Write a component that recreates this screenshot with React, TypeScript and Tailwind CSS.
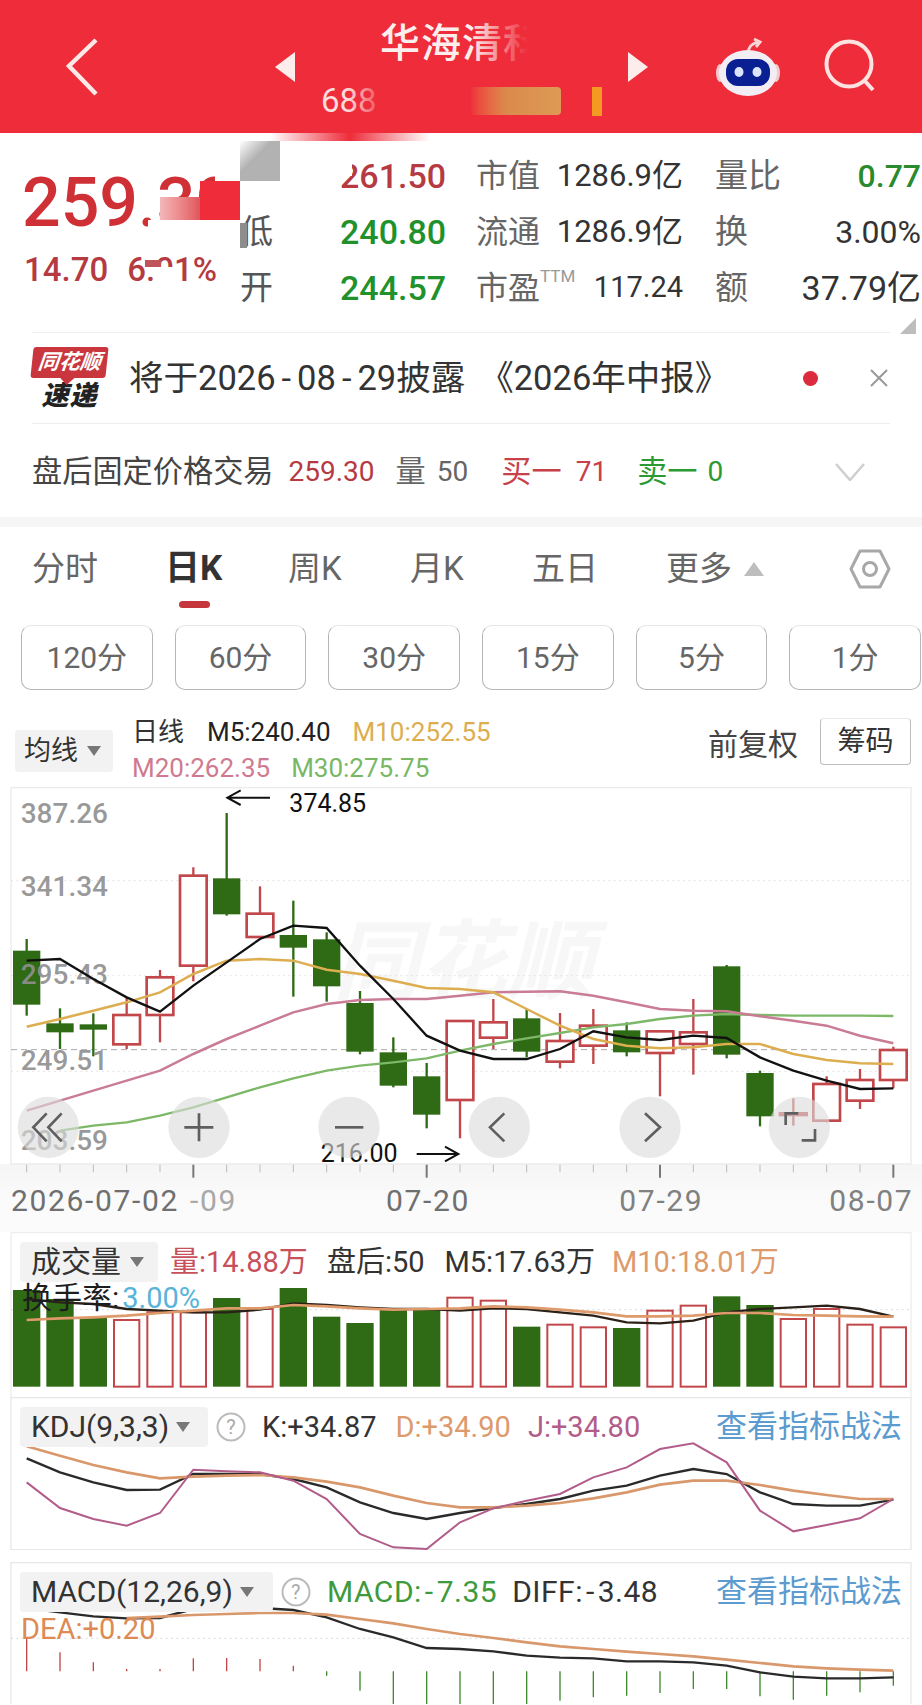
import React from "react";

const cx = (i: number) => 80 + 100 * i;
const pts = (a: number[], start = 0) => a.map((y, i) => `${cx(i + start)},${y}`).join(" ");

const GREEN = "#2F6A14";
const RED = "#C2474A";

// wick top, wick bottom, body top, body bottom, red
const candles: [number, number, number, number, boolean][] = [
  [480, 710, 515, 677, false],
  [688, 810, 733, 760, false],
  [703, 832, 736, 752, false],
  [655, 810, 708, 796, true],
  [573, 790, 595, 708, true],
  [265, 607, 290, 560, true],
  [102, 410, 298, 406, false],
  [322, 475, 404, 474, true],
  [365, 653, 468, 506, false],
  [460, 668, 481, 622, false],
  [636, 826, 672, 818, false],
  [775, 925, 820, 920, false],
  [852, 1048, 892, 1007, false],
  [726, 1078, 726, 963, true],
  [660, 810, 730, 776, true],
  [690, 835, 718, 818, false],
  [702, 868, 786, 848, true],
  [690, 855, 740, 800, true],
  [730, 832, 754, 820, false],
  [757, 952, 757, 822, true],
  [660, 887, 760, 795, true],
  [558, 838, 562, 827, false],
  [875, 1042, 882, 1012, false],
  [958, 1040, 1003, 1008, true],
  [892, 1030, 915, 1025, true],
  [870, 990, 903, 965, true],
  [803, 928, 813, 903, true],
];

const m5 = [545, 540, 600, 655, 698, 620, 550, 480, 440, 447, 560, 660, 770, 815, 840, 840, 810, 757, 775, 783, 770, 777, 835, 875, 905, 930, 928];
const m10 = [743, 720, 695, 670, 640, 585, 545, 540, 545, 572, 585, 605, 627, 630, 640, 690, 740, 780, 800, 808, 805, 795, 795, 825, 843, 853, 855];
const m20 = [995, 965, 935, 905, 875, 825, 780, 740, 700, 675, 663, 660, 660, 650, 640, 638, 637, 650, 670, 690, 695, 697, 712, 725, 740, 770, 793];
const m30 = [1055, 1040, 1030, 1010, 985, 955, 925, 898, 875, 860, 850, 838, 815, 795, 778, 762, 745, 735, 720, 710, 705, 708, 710, 710, 710, 711];

const volTops: [number, boolean][] = [
  [213, false], [240, false], [295, false], [303, true], [280, true], [280, true], [237, false], [270, true], [207, false],
  [293, false], [312, false], [270, false], [270, false], [236, true], [245, true], [323, false], [317, true], [325, true],
  [327, false], [275, true], [260, true], [232, false], [258, false], [300, true], [270, true], [317, true], [325, true],
];
const volBlack = [240, 250, 255, 270, 275, 280, 280, 272, 253, 258, 265, 270, 270, 275, 268, 270, 280, 290, 310, 313, 305, 280, 270, 265, 260, 270, 293];
const volOrange = [303, 298, 295, 290, 282, 275, 268, 268, 258, 262, 268, 272, 270, 268, 262, 265, 272, 280, 292, 292, 290, 282, 282, 288, 290, 292, 293];

const kdjJ = [130, 207, 240, 260, 222, 92, 97, 100, 125, 180, 285, 325, 330, 250, 208, 185, 165, 115, 85, 30, 13, 70, 215, 277, 258, 238, 180];
const kdjK = [58, 100, 130, 153, 152, 105, 105, 105, 120, 145, 190, 222, 240, 222, 207, 195, 180, 155, 140, 110, 90, 105, 160, 195, 200, 200, 182];
const kdjD = [22, 50, 78, 100, 118, 113, 110, 108, 115, 128, 145, 170, 192, 205, 205, 200, 192, 178, 160, 137, 125, 125, 138, 155, 168, 180, 180];

const macdBars = [598, 640, 670, 690, 690, 658, 657, 660, 680, 710, 755, 800, 800, 800, 800, 800, 785, 775, 770, 762, 750, 750, 772, 782, 770, 760, 740];
const diff = [508, 520, 532, 538, 537, 510, 507, 507, 513, 535, 570, 595, 627, 630, 637, 650, 656, 658, 667, 667, 670, 680, 700, 713, 718, 718, 715];
const dea = [537, 533, 528, 525, 522, 522, 527, 540, 553, 570, 585, 597, 610, 622, 630, 638, 645, 652, 662, 672, 682, 688, 692, 695];

function Caret() {
  return (
    <svg width="16" height="12" viewBox="0 0 16 12">
      <polygon points="1,1 15,1 8,11" fill="#777" />
    </svg>
  );
}

function Help() {
  return (
    <svg width="30" height="30" viewBox="0 0 30 30">
      <circle cx="15" cy="15" r="13.5" fill="#fff" stroke="#bbb" strokeWidth="2" />
      <text x="15" y="22" textAnchor="middle" fontSize="20" fill="#aaa">?</text>
    </svg>
  );
}

function Dash({ w = "mx-[3px]" }: { w?: string }) {
  return <span className={w}>-</span>;
}

function RoundBtn({ x, children }: { x: number; children: React.ReactNode }) {
  return (
    <g>
      <circle cx={x} cy={1045} r={92} fill="#dcdcdc" fillOpacity={0.62} />
      <g fill="none" stroke="#5f5f5f" strokeWidth={8}>{children}</g>
    </g>
  );
}

function MainChart() {
  return (
    <svg viewBox="0 24 2766 1335" className="block h-[445px] w-[922px]">
      <defs>
        <linearGradient id="axisBg" x1="0" y1="0" x2="0" y2="1">
          <stop offset="0" stopColor="#f5f5f5" />
          <stop offset="0.5" stopColor="#fafafa" />
          <stop offset="1" stopColor="#fcfcfc" />
        </linearGradient>
      </defs>
      <rect x="0" y="1155" width="2766" height="204" fill="url(#axisBg)" />
      <rect x="33" y="26" width="2700" height="1129" fill="#fff" stroke="#ebebeb" strokeWidth="4" />
      <text x="1000" y="640" fontSize="260" fontWeight="700" fontStyle="italic" fill="#f7f7f7">同花顺</text>
      {[305, 590, 877].map((y) => (
        <line key={y} x1="33" x2="2733" y1={y} y2={y} stroke="#e4e4e4" strokeWidth="3" strokeDasharray="6 10" />
      ))}
      <line x1="33" x2="2733" y1="812" y2="812" stroke="#aaa" strokeWidth="3" strokeDasharray="18 12" />
      {candles.map(([wt, wb, bt, bb, red], i) => (
        <g key={i}>
          <line x1={cx(i)} x2={cx(i)} y1={wt} y2={wb} stroke={red ? RED : GREEN} strokeWidth="7" />
          {red ? (
            <rect x={cx(i) - 40} y={bt} width="80" height={bb - bt} fill={i === 23 ? "none" : "#fff"} stroke={RED} strokeWidth="8" />
          ) : (
            <rect x={cx(i) - 41} y={bt} width="82" height={bb - bt} fill={GREEN} />
          )}
        </g>
      ))}
      <g fill="#8f8f8f" fontSize="84" fontWeight="500" fillOpacity="0.92">
        <text x="62" y="132">387.26</text>
        <text x="62" y="351">341.34</text>
        <text x="62" y="614">295.43</text>
        <text x="62" y="874">249.51</text>
        <text x="62" y="1114">203.59</text>
      </g>
      <polyline points={pts(m30, 1)} fill="none" stroke="#7DB868" strokeWidth="7" />
      <polyline points={pts(m20)} fill="none" stroke="#C97C93" strokeWidth="7.5" />
      <polyline points={pts(m10)} fill="none" stroke="#DDAE50" strokeWidth="7.5" />
      <polyline points={pts(m5)} fill="none" stroke="#111" strokeWidth="7" />
      <g stroke="#111" strokeWidth="6" fill="none">
        <path d="M810 56H685M722 34L682 56L722 78" />
        <path d="M1250 1125H1372M1335 1103L1375 1125L1335 1147" />
      </g>
      <text x="868" y="100" fontSize="75" fill="#111">374.85</text>
      <text x="962" y="1148" fontSize="75" fill="#111">216.00</text>
      <RoundBtn x={145}><path d="M140 1003L100 1045L140 1087M185 1003L145 1045L185 1087" /></RoundBtn>
      <RoundBtn x={597}><path d="M597 1003V1087M553 1045H640" /></RoundBtn>
      <RoundBtn x={1047}><path d="M1005 1045H1090" /></RoundBtn>
      <RoundBtn x={1498}><path d="M1513 1003L1470 1045L1513 1087" /></RoundBtn>
      <RoundBtn x={1950}><path d="M1935 1003L1980 1045L1935 1087" /></RoundBtn>
      <RoundBtn x={2398}><path d="M2357 1038V1003H2395M2445 1050V1084H2405" /></RoundBtn>
      {candles.map((_, i) => {
        const big = [5, 12, 19, 26].includes(i);
        return <line key={i} x1={cx(i)} x2={cx(i)} y1="1157" y2={big ? 1196 : 1180} stroke={big ? "#777" : "#bbb"} strokeWidth={big ? 6 : 3} />;
      })}
      <g fontSize="90" fill="#6f6f6f" letterSpacing="5">
        <text x="33" y="1296">2026-07-02</text>
        <text x="570" y="1296" fill="#a8a8a8">-09</text>
        <text x="1158" y="1296">07-20</text>
        <text x="1858" y="1296" fill="#808080">07-29</text>
        <text x="2488" y="1296" fill="#808080">08-07</text>
      </g>
    </svg>
  );
}

function VolumeChart() {
  return (
    <svg viewBox="0 39 2766 495" className="absolute inset-0 h-[165px] w-[922px]">
      <rect x="33" y="41" width="2700" height="600" fill="#fff" stroke="#ededed" strokeWidth="4" />
      <line x1="33" x2="2733" y1="272" y2="272" stroke="#ddd" strokeWidth="3" strokeDasharray="6 10" />
      {volTops.map(([t, red], i) =>
        red ? (
          <rect key={i} x={cx(i) - 38} y={t} width="76" height={503 - t} fill="#fff" stroke={RED} strokeWidth="6" />
        ) : (
          <rect key={i} x={cx(i) - 41} y={t} width="82" height={503 - t} fill={GREEN} />
        )
      )}
      <polyline points={pts(volBlack)} fill="none" stroke="#2b2118" strokeWidth="7" />
      <polyline points={pts(volOrange)} fill="none" stroke="#DE9A6B" strokeWidth="8" />
    </svg>
  );
}

function KdjChart() {
  return (
    <svg viewBox="0 -126 2766 459" className="absolute inset-0 h-[153px] w-[922px]">
      <rect x="33" y="-124" width="2700" height="456" fill="#fff" stroke="#e8e8e8" strokeWidth="4" />
      <polyline points={pts(kdjK)} fill="none" stroke="#2a2a2a" strokeWidth="7" />
      <polyline points={pts(kdjD)} fill="none" stroke="#D9986C" strokeWidth="8" />
      <polyline points={pts(kdjJ)} fill="none" stroke="#B25C8A" strokeWidth="6" />
    </svg>
  );
}

function MacdChart() {
  return (
    <svg viewBox="0 369 2766 426" className="absolute inset-0 h-[142px] w-[922px]">
      <rect x="33" y="371" width="2700" height="600" fill="#fff" stroke="#e8e8e8" strokeWidth="4" />
      <line x1="33" x2="2733" y1="598" y2="598" stroke="#ddd" strokeWidth="3" strokeDasharray="6 10" />
      {macdBars.map((y, i) => (
        <line key={i} x1={cx(i)} x2={cx(i)} y1="697" y2={y} stroke={i < 9 ? "#C2474A" : "#3E8A2C"} strokeWidth="4" />
      ))}
      <polyline points={pts(diff)} fill="none" stroke="#2a2a2a" strokeWidth="7" />
      <polyline points={pts(dea, 3)} fill="none" stroke="#D9986C" strokeWidth="8" />
    </svg>
  );
}

function StatRow({
  a, v, vc, b, bv, bvc = "text-[31px]", c, cv, cvc = "text-[32px] text-[#333]",
}: {
  a: string; v: string; vc: string; b: React.ReactNode; bv: string; bvc?: string; c: string; cv: string; cvc?: string;
}) {
  return (
    <div className="flex h-[56px] items-center">
      <div className="w-[100px] text-[33px] text-[#555]">{a}</div>
      <div className={`w-[105px] text-right text-[34px] font-medium ${vc}`}>{v}</div>
      <div className="ml-[31px] w-[80px] whitespace-nowrap text-[32px] text-[#666]">{b}</div>
      <div className={`w-[127px] whitespace-nowrap text-right text-[#333] ${bvc}`}>{bv}</div>
      <div className="ml-[32px] flex flex-1 items-center justify-between">
        <span className="text-[33px] text-[#666]">{c}</span>
        <span className={cvc}>{cv}</span>
      </div>
    </div>
  );
}

export default function App() {
  return (
    <div className="relative h-[1705px] w-[922px] overflow-hidden bg-white font-['Roboto','Noto_Sans_CJK_SC',sans-serif]">
      {/* header */}
      <header className="relative flex h-[133px] items-center bg-[#EE2C3A]">
        <svg width="40" height="62" viewBox="0 0 40 62" className="ml-[62px]">
          <polyline points="34,4 7,30 34,58" fill="none" stroke="#fde8e8" strokeWidth="4.5" />
        </svg>
        <svg width="22" height="32" viewBox="0 0 22 32" className="ml-[172px]">
          <polygon points="21,1 21,31 1,16" fill="#fdecec" />
        </svg>
        <div className="relative ml-[25px] flex h-[133px] w-[306px] flex-col">
          <div className="mt-[20px] w-[320px] pl-[59px] text-[40px] font-medium leading-[48px] tracking-[1px] text-[#fdeeee]">华海清科</div>
          <div className="absolute left-[150px] top-[18px] h-[56px] w-[95px] bg-gradient-to-r from-transparent to-[#EE2C3A] to-[60%]" />
          <div className="mt-[18px] flex items-center">
            <span className="text-[33px] leading-[30px] text-[#fbdcdc]">688</span>
            <div className="-ml-[30px] h-[30px] w-[40px] bg-gradient-to-r from-transparent to-[#EE2C3A]" />
          </div>
        </div>
        <svg width="22" height="32" viewBox="0 0 22 32">
          <polygon points="1,1 1,31 21,16" fill="#fdecec" />
        </svg>
        <svg width="68" height="62" viewBox="0 0 68 62" className="ml-[65px]">
          <path d="M34 18C34 12 36 8 44 6M40 3l6 3l-4 5" fill="none" stroke="#fbd5d5" strokeWidth="3" />
          <ellipse cx="6" cy="37" rx="4" ry="9" fill="#f2c9cf" />
          <ellipse cx="62" cy="37" rx="4" ry="9" fill="#f2c9cf" />
          <ellipse cx="34" cy="37" rx="29" ry="23" fill="#f3eef3" />
          <rect x="12" y="23" width="44" height="27" rx="12" fill="#0A1F91" />
          <ellipse cx="25" cy="36" rx="4.5" ry="5" fill="#dbe4fb" />
          <ellipse cx="43" cy="36" rx="4.5" ry="5" fill="#dbe4fb" />
        </svg>
        <svg width="56" height="58" viewBox="0 0 56 58" className="ml-[41px]">
          <circle cx="26" cy="26" r="22.5" fill="none" stroke="#fde2e2" strokeWidth="4" />
          <line x1="41" y1="42" x2="50" y2="52" stroke="#fde2e2" strokeWidth="4" />
        </svg>
        {/* redacted patch on the code line */}
        <div className="absolute left-[440px] top-[87px] h-[28px] w-[121px] rounded-r-sm bg-gradient-to-r from-[#EE2C3A] from-[25%] via-[#DB8A4C] via-[55%] to-[#DE9B55]" />
        <div className="absolute left-[592px] top-[87px] h-[29px] w-[10px] bg-[#F49A22]" />
      </header>

      {/* quote */}
      <section className="relative flex h-[199px]">
        <div className="w-[240px] pl-[22px] pt-[36px]">
          <div className="whitespace-nowrap text-[68px] font-medium leading-[68px] text-[#CF3036]">259.30</div>
          <div className="mt-[18px] flex items-center gap-[19px] whitespace-nowrap pl-[2px] text-[33px] font-medium leading-[30px] text-[#B53A42]">
            <span>14.70</span>
            <span>6.01%</span>
          </div>
        </div>
        <div className="flex-1 pr-[1px] pt-[15px]">
          <StatRow a="" v="261.50" vc="text-[#B53A42]" b="市值" bv="1286.9亿" c="量比" cv="0.77" cvc="text-[32px] font-medium text-[#2A8A2E]" />
          <StatRow a="低" v="240.80" vc="text-[#21912B]" b="流通" bv="1286.9亿" c="换" cv="3.00%" />
          <StatRow
            a="开"
            v="244.57"
            vc="text-[#21912B]"
            b={<>市盈<span className="align-top text-[17px] text-[#999]">TTM</span></>}
            bv="117.24"
            bvc="text-[29px]"
            c="额"
            cv="37.79亿"
            cvc="text-[34px] text-[#333]"
          />
        </div>
        {/* redaction blocks laid over the quote */}
        <div className="absolute left-[270px] top-0 h-[8px] w-[160px] bg-gradient-to-r from-transparent via-[#EE2C3A] to-transparent" />
        <div className="absolute left-[240px] top-[8px] h-[40px] w-[40px] bg-gradient-to-br from-white to-[#b2b2b2] to-[40%]" />
        <div className="absolute left-[200px] top-[48px] h-[39px] w-[40px] bg-[#EE2C3A]" />
        <div className="absolute left-[160px] top-[64px] h-[23px] w-[40px] bg-gradient-to-r from-[#f2b8bb] to-[#E0555C]" />
        <div className="absolute left-[148px] top-[87px] h-[34px] w-[92px] bg-white" />
        <div className="absolute left-[215px] top-[30px] h-[18px] w-[25px] bg-white" />
        <div className="absolute left-[340px] top-[25px] h-[18px] w-[12px] bg-white" />
        <div className="absolute left-[240px] top-[90px] h-[25px] w-[7px] bg-[#8d8d8d]" />
        <div className="absolute left-[145px] top-[127px] h-[7px] w-[16px] bg-[#C0525A]" />
        <div className="absolute left-[154px] top-[134px] h-[22px] w-[19px] bg-white" />
        <svg width="16" height="16" viewBox="0 0 16 16" className="absolute left-[900px] top-[185px]">
          <polygon points="16,0 16,16 0,16" fill="#bdbdbd" />
        </svg>
      </section>

      {/* notice */}
      <div className="mx-[32px] flex h-[92px] items-center border-y border-[#eeeeee]">
        <div className="flex h-[63px] w-[75px] flex-col items-center">
          <div className="relative flex h-[31px] w-[75px] -skew-x-6 items-center justify-center rounded-[3px] bg-[#C9363E] text-[21px] font-bold italic leading-none text-white">
            同花顺
            <div className="absolute -bottom-[5px] left-[32px] size-[10px] rotate-45 bg-[#C9363E]" />
          </div>
          <div className="mt-[5px] text-[27px] font-black italic leading-[27px] tracking-[1px] text-[#222]">速递</div>
        </div>
        <div className="ml-[22px] whitespace-nowrap pt-[1px] text-[34.5px] leading-none text-[#333]">
          将于2026<Dash w="mx-[6px]" />08<Dash w="mx-[6px]" />29披露<span className="ml-[14px]">《</span>2026年中报》
        </div>
        <div className="ml-auto mr-[52px] size-[15px] rounded-full bg-[#DB2B3C]" />
        <svg width="18" height="18" viewBox="0 0 18 18" className="mr-[2px]">
          <path d="M1 1L17 17M17 1L1 17" stroke="#999" strokeWidth="2" />
        </svg>
      </div>

      {/* after hours */}
      <div className="flex h-[93px] items-center whitespace-nowrap pl-[32px] pr-[57px] pt-[2px] text-[30.2px]">
        <span className="text-[#444]">盘后固定价格交易</span>
        <span className="ml-[15px] text-[28px] text-[#B53A42]">259.30</span>
        <span className="ml-[21px] text-[#666]">量</span>
        <span className="ml-[11px] text-[28px] text-[#666]">50</span>
        <span className="ml-[33px] text-[#C8404A]">买一</span>
        <span className="ml-[14px] text-[28px] text-[#C8404A]">71</span>
        <span className="ml-[30px] text-[#2C9A34]">卖一</span>
        <span className="ml-[10px] text-[28px] text-[#2C9A34]">0</span>
        <svg width="30" height="18" viewBox="0 0 30 18" className="ml-auto">
          <polyline points="1,1 15,17 29,1" fill="none" stroke="#cfcfcf" strokeWidth="2.5" />
        </svg>
      </div>
      <div className="h-[10px] bg-[#f6f6f6]" />

      {/* tabs */}
      <div className="flex h-[98px] items-start whitespace-nowrap pl-[32px] text-[33px] text-[#666]">
        <div className="flex h-[84px] w-[133px] items-center">分时</div>
        <div className="relative flex h-[84px] w-[123px] items-center text-[35px] font-bold text-[#333]">
          日K
          <div className="absolute left-[14px] top-[74px] h-[7px] w-[31px] rounded-full bg-[#C6373D]" />
        </div>
        <div className="flex h-[84px] w-[122px] items-center">周K</div>
        <div className="flex h-[84px] w-[122px] items-center">月K</div>
        <div className="flex h-[84px] w-[134px] items-center">五日</div>
        <div className="flex h-[84px] items-center">
          更多
          <svg width="20" height="14" viewBox="0 0 20 14" className="ml-[12px]">
            <polygon points="10,0 20,14 0,14" fill="#bdbdbd" />
          </svg>
        </div>
        <svg width="42" height="40" viewBox="0 0 42 40" className="ml-[85px] mt-[22px]">
          <polygon points="11,2 31,2 40,20 31,38 11,38 2,20" fill="none" stroke="#a8a8a8" strokeWidth="3" strokeLinejoin="round" />
          <circle cx="21" cy="20" r="6.5" fill="none" stroke="#a8a8a8" strokeWidth="3" />
        </svg>
      </div>

      {/* periods */}
      <div className="grid h-[65px] grid-cols-6 gap-[22px] pl-[21px] pr-[1px]">
        {["120分", "60分", "30分", "15分", "5分", "1分"].map((t) => (
          <div key={t} className="flex items-center justify-center rounded-[10px] border border-[#b5b5b5] border-t-[#e6e6e6] text-[30px] text-[#666]">{t}</div>
        ))}
      </div>

      {/* legend */}
      <div className="flex h-[97px] items-start whitespace-nowrap pl-[15px] pr-[11px] text-[26px]">
        <div className="mt-[40px] flex h-[42px] w-[98px] items-center gap-[8px] rounded-[4px] bg-[#f2f2f2] pl-[9px] text-[27px] text-[#333]">
          均线 <Caret />
        </div>
        <div className="ml-[19px] mt-[24px] leading-[36px]">
          <div className="flex">
            <span className="text-[#333]">日线</span>
            <span className="ml-[23px] text-[#222]">M5:240.40</span>
            <span className="ml-[22px] text-[#DDAE50]">M10:252.55</span>
          </div>
          <div className="flex">
            <span className="text-[#D07A90]">M20:262.35</span>
            <span className="ml-[21px] text-[#78B865]">M30:275.75</span>
          </div>
        </div>
        <div className="ml-auto mt-[28px] flex items-start">
          <span className="mt-[8px] text-[30px] leading-[38px] text-[#444]">前复权</span>
          <div className="ml-[22px] flex h-[47px] w-[91px] items-center justify-center rounded-[4px] border border-[#bdbdbd] border-t-[#e8e8e8] text-[28px] text-[#333]">筹码</div>
        </div>
      </div>

      <MainChart />

      {/* volume */}
      <section className="relative h-[165px] whitespace-nowrap">
        <VolumeChart />
        <div className="relative flex h-[50px] items-center pl-[20px] pt-[10px] text-[29px] leading-[40px]">
          <div className="flex h-[40px] w-[138px] items-center gap-[8px] rounded-[4px] bg-[#f2f2f2] pl-[11px] text-[30px] text-[#333]">成交量<Caret /></div>
          <span className="ml-[12px] text-[#C8505A]">量:14.88万</span>
          <span className="ml-[19px] text-[#333]">盘后:50</span>
          <span className="ml-[20px] text-[#333]">M5:17.63万</span>
          <span className="ml-[17px] text-[#DD9A6C]">M10:18.01万</span>
        </div>
        <div className="relative pl-[22px] text-[30px] leading-[32px] text-[#1d1d1d]">
          换手率:<span className="ml-[3px] text-[29px] text-[#58B4D8]">3.00%</span>
        </div>
      </section>

      {/* KDJ */}
      <section className="relative h-[165px] whitespace-nowrap">
        <KdjChart />
        <div className="relative flex h-[50px] items-center pl-[20px] pt-[10px] text-[29px] leading-[40px]">
          <div className="flex h-[40px] w-[188px] items-center gap-[6px] rounded-[4px] bg-[#f2f2f2] pl-[11px] text-[30px] text-[#333]">KDJ(9,3,3)<Caret /></div>
          <span className="ml-[8px] flex"><Help /></span>
          <span className="ml-[16px] text-[#333]">K:+34.87</span>
          <span className="ml-[19px] text-[#DD9A6C]">D:+34.90</span>
          <span className="ml-[17px] text-[#B25C8A]">J:+34.80</span>
          <span className="ml-auto mr-[20px] text-[31px] text-[#5B9BCF]">查看指标战法</span>
        </div>
      </section>

      {/* MACD */}
      <section className="relative h-[142px] whitespace-nowrap">
        <MacdChart />
        <div className="relative flex h-[50px] items-center pl-[20px] pt-[10px] text-[30px] leading-[40px] tracking-[0.5px]">
          <div className="flex h-[40px] w-[253px] items-center gap-[6px] rounded-[4px] bg-[#f2f2f2] pl-[11px] text-[#333] tracking-normal">MACD(12,26,9)<Caret /></div>
          <span className="ml-[8px] flex"><Help /></span>
          <span className="ml-[16px] text-[#3E9A3C]">MACD:<Dash />7.35</span>
          <span className="ml-[15px] text-[#333]">DIFF:<Dash />3.48</span>
          <span className="ml-auto mr-[20px] text-[31px] tracking-normal text-[#5B9BCF]">查看指标战法</span>
        </div>
        <div className="relative pl-[21px] pt-[2px] text-[29px] leading-[30px] text-[#DD8A54]">DEA:+0.20</div>
      </section>
    </div>
  );
}
